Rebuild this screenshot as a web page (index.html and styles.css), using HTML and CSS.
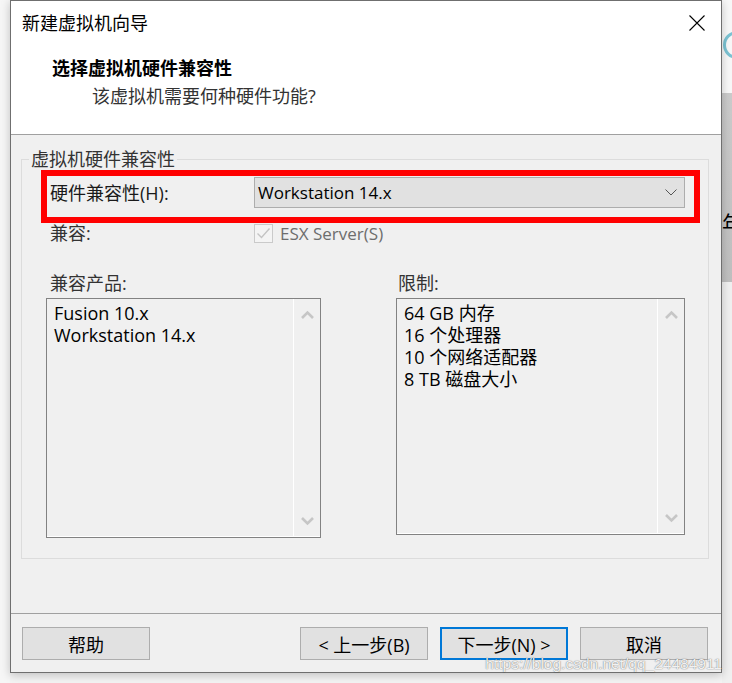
FILE: index.html
```html
<!DOCTYPE html>
<html lang="zh-CN">
<head>
    <meta charset="UTF-8">
    <meta name="viewport" content="width=device-width, initial-scale=1.0">
    <title>新建虚拟机向导</title>
    <link rel="stylesheet" href="styles.css">
</head>
<body>
    <div class="screen">
        <div class="edge edge-left"></div>

        <div class="wizard">
            <!-- 顶部白色区域 -->
            <div class="wizard-head">
                <div class="titlebar">
                    <span class="title">新建虚拟机向导</span>
                    <button class="close" type="button">
                        <svg width="16" height="16" viewBox="0 0 16 16"><path d="M0.5 0.5L15.5 15.5M15.5 0.5L0.5 15.5" stroke="#000" stroke-width="1.1" fill="none"/></svg>
                    </button>
                </div>
                <div class="step-title">选择虚拟机硬件兼容性</div>
                <div class="step-desc">该虚拟机需要何种硬件功能?</div>
            </div>

            <div class="wizard-body">
                <fieldset class="group">
                    <legend>虚拟机硬件兼容性</legend>

                    <div class="row row-hw">
                        <span class="row-label">硬件兼容性(H):</span>
                        <div class="combo">
                            <span class="combo-text">Workstation 14.x</span>
                            <svg width="12" height="7" viewBox="0 0 12 7"><path d="M0.5 0.5L6 6L11.5 0.5" fill="none" stroke="#555" stroke-width="1"/></svg>
                        </div>
                    </div>

                    <div class="row row-compat">
                        <span class="row-label">兼容:</span>
                        <span class="check">
                            <svg width="17" height="17" viewBox="0 0 17 17"><path d="M2.5 8.5L6.5 12.5L14.5 3.5" fill="none" stroke="#c4c4c4" stroke-width="1.4"/></svg>
                        </span>
                        <span class="check-text">ESX Server(S)</span>
                    </div>

                    <div class="lists">
                        <div class="list-col">
                            <div class="list-label">兼容产品:</div>
                            <div class="listbox listbox-left">
                                <ul class="list-items">
                                    <li>Fusion 10.x</li>
                                    <li>Workstation 14.x</li>
                                </ul>
                                <div class="scroll">
                                    <svg width="13" height="9" viewBox="0 0 13 9"><path d="M1 8L6.5 2.5L12 8" fill="none" stroke="#c6c6c6" stroke-width="2.6"/></svg>
                                    <svg width="13" height="9" viewBox="0 0 13 9"><path d="M1 1L6.5 6.5L12 1" fill="none" stroke="#c6c6c6" stroke-width="2.6"/></svg>
                                </div>
                            </div>
                        </div>
                        <div class="list-col">
                            <div class="list-label list-label-right">限制:</div>
                            <div class="listbox listbox-right">
                                <ul class="list-items">
                                    <li>64 GB 内存</li>
                                    <li>16 个处理器</li>
                                    <li>10 个网络适配器</li>
                                    <li>8 TB 磁盘大小</li>
                                </ul>
                                <div class="scroll">
                                    <svg width="13" height="9" viewBox="0 0 13 9"><path d="M1 8L6.5 2.5L12 8" fill="none" stroke="#c6c6c6" stroke-width="2.6"/></svg>
                                    <svg width="13" height="9" viewBox="0 0 13 9"><path d="M1 1L6.5 6.5L12 1" fill="none" stroke="#c6c6c6" stroke-width="2.6"/></svg>
                                </div>
                            </div>
                        </div>
                    </div>
                </fieldset>
            </div>

            <div class="wizard-foot">
                <button class="btn" type="button">帮助</button>
                <div class="nav">
                    <button class="btn" type="button">&lt; 上一步(B)</button>
                    <button class="btn btn-primary" type="button">下一步(N) &gt;</button>
                    <button class="btn" type="button">取消</button>
                </div>
                <span class="watermark">https://blog.csdn.net/qq_24484911</span>
            </div>
        </div>

        <div class="edge edge-right">
            <div class="edge-top"><div class="ring"></div></div>
            <div class="edge-mid"><span class="glyph">年</span></div>
            <div class="edge-low"></div>
        </div>
    </div>
</body>
</html>
```

FILE: styles.css
```css
* {
    padding: 0;
    margin: 0;
    box-sizing: border-box;
}
body {
    background-color: #f4f4f4;
    font-family: "Open Sans", "Noto Sans CJK SC", sans-serif;
    font-size: 18px;
    color: #1a1a1a;
}
.screen {
    display: flex;
    align-items: flex-start;
    width: 732px;
    height: 683px;
    overflow: hidden;
}
.edge {
    flex: 0 0 10px;
    height: 683px;
}
.edge-left {
    background-color: #f6f6f6;
}

/* 对话框 */
.wizard {
    position: relative;
    z-index: 1;
    flex: 0 0 712px;
    height: 673px;
    display: flex;
    flex-direction: column;
    border: 1px solid #6f6f6f;
    background-color: #f0f0f0;
    box-shadow: 0 2px 9px rgba(0, 0, 0, 0.22);
}
.wizard-head {
    flex: 0 0 134px;
    background-color: #fff;
    border-bottom: 1px solid #a0a0a0;
}
.titlebar {
    display: flex;
    justify-content: space-between;
    align-items: center;
    margin-top: 10px;
    padding: 0 16px 0 11px;
    height: 24px;
}
.title {
    line-height: 24px;
    color: #000;
}
.close {
    display: flex;
    border: 0;
    background: none;
}
.step-title {
    margin-top: 21px;
    padding-left: 41px;
    line-height: 24px;
    font-weight: 700;
    color: #000;
}
.step-desc {
    margin-top: 4px;
    padding-left: 81px;
    line-height: 24px;
    color: #333;
}

.wizard-body {
    flex: 1;
    padding: 14px 12px 0 10px;
}
.group {
    border: 1px solid #dcdcdc;
    padding: 0 0 20px 0;
    min-width: 0;
}
.group legend {
    margin-left: 7px;
    padding: 0 2px;
    line-height: 20px;
    color: #333;
}
.row {
    display: flex;
    align-items: center;
}
.row-label {
    flex: 0 0 204px;
    line-height: 20px;
}
/* 红框标注 */
.row-hw {
    margin: 1px 8px 0 19px;
    border: 6px solid #ff0000;
    padding: 1px 9px 9px 3px;
}
.combo {
    flex: 1;
    height: 31px;
    display: flex;
    align-items: center;
    justify-content: space-between;
    padding: 0 7px 0 3px;
    border: 1px solid #adadad;
    background-color: #e1e1e1;
}
.combo-text {
    font-size: 17px;
    color: #000;
}
.row-compat {
    margin-left: 28px;
    height: 20px;
}
.row-compat .row-label {
    color: #333;
}
.check {
    flex: 0 0 19px;
    height: 19px;
    display: flex;
    align-items: center;
    justify-content: center;
    border: 1px solid #cacaca;
    background-color: #f4f4f4;
}
.check-text {
    margin-left: 7px;
    font-size: 17px;
    color: #6d6d6d;
}

.lists {
    margin-top: 30px;
    padding-left: 24px;
    display: grid;
    grid-template-columns: 275px 289px;
    column-gap: 75px;
    align-items: start;
}
.list-label {
    padding-left: 4px;
    line-height: 20px;
    margin-bottom: 5px;
    color: #333;
}
.list-label-right {
    padding-left: 2px;
}
.listbox {
    display: flex;
    border: 1px solid #828282;
    box-shadow: inset 0 -1px 0 #fff;
}
.listbox-left {
    height: 240px;
}
.listbox-right {
    height: 237px;
}
.list-items {
    flex: 1;
    list-style: none;
    padding: 3px 0 0 7px;
}
.list-items li {
    line-height: 22px;
    color: #000;
}
.scroll {
    flex: 0 0 27px;
    display: flex;
    flex-direction: column;
    justify-content: space-between;
    align-items: center;
    padding: 11px 0 10px 0;
    border-left: 1px solid #fff;
    border-bottom: 1px solid #fff;
}

.wizard-foot {
    position: relative;
    flex: 0 0 59px;
    display: flex;
    justify-content: space-between;
    align-items: flex-start;
    padding: 13px 13px 0 11px;
    border-top: 1px solid #a0a0a0;
}
.nav {
    display: flex;
    gap: 12px;
}
.btn {
    width: 128px;
    height: 33px;
    border: 1px solid #adadad;
    background-color: #e1e1e1;
    font-family: "Open Sans", "Noto Sans CJK SC", sans-serif;
    font-size: 18px;
    color: #000;
}
.btn-primary {
    border: 2px solid #0078d7;
}
/* 图片水印 */
.watermark {
    position: absolute;
    right: -1px;
    top: 41px;
    font-family: "Liberation Sans", sans-serif;
    font-size: 15.5px;
    line-height: 18px;
    color: rgba(255, 255, 255, 0.92);
    text-shadow: 0 0 1px rgba(0, 0, 0, 0.55), 0 0 2px rgba(0, 0, 0, 0.2);
    white-space: nowrap;
}

/* 窗口右侧露出的背景 */
.edge-right {
    display: flex;
    flex-direction: column;
    overflow: hidden;
}
.edge-top {
    flex: 0 0 93px;
    padding: 31px 0 0 1px;
    background-color: #f8f8f8;
}
.ring {
    width: 28px;
    height: 28px;
    border: 3px solid #7cc3d3;
    border-radius: 50%;
}
.edge-mid {
    flex: 0 0 189px;
    padding-top: 119px;
    background: linear-gradient(#cbcbcb, #bfbfbf);
}
.glyph {
    display: block;
    font-size: 21px;
    line-height: 22px;
    color: #000;
}
.edge-low {
    flex: 1;
    background-color: #f0f0f0;
}
```
